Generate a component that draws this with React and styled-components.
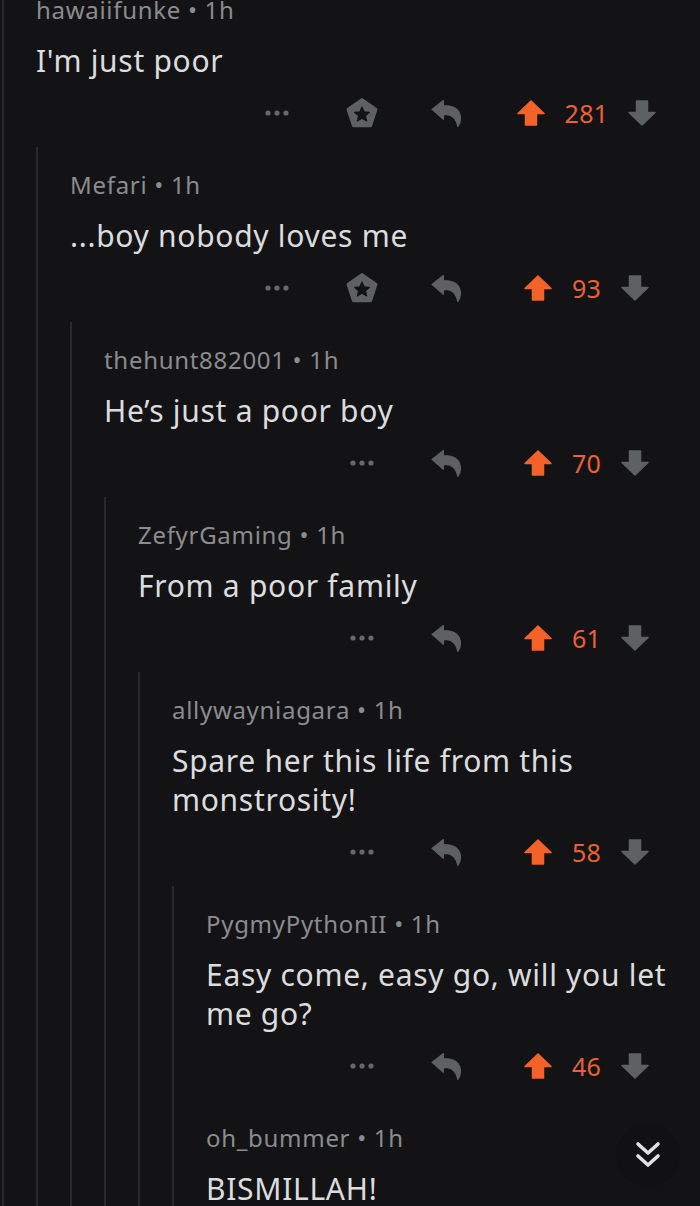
import React from "react";
import styled, { createGlobalStyle } from "styled-components";

const GlobalStyle = createGlobalStyle`
  html, body {
    margin: 0;
    padding: 0;
    background: #131315;
    height: 100%;
    overflow: hidden;
  }
  body {
    font-family: "Noto Sans", "Open Sans", sans-serif;
  }
`;

const Screen = styled.div`
  position: relative;
  width: 700px;
  height: 1206px;
  overflow: hidden;
  background: #131315;
`;

const Thread = styled.div`
  margin: -28px 0 0 2px;
  min-height: 1300px;
  border-left: 2px solid #2a2a2d;
  padding-left: 32px;
`;

const CommentBox = styled.div`
  padding-top: 23px;
`;

const Header = styled.div`
  font-size: 24px;
  line-height: 30px;
  letter-spacing: 0.7px;
  color: #8a8c8f;
  white-space: nowrap;
`;

const Body = styled.div`
  margin-top: 16px;
  padding-right: 28px;
  font-size: 30px;
  line-height: 39px;
  letter-spacing: 0.7px;
  color: #dcdcde;
`;

const Actions = styled.div`
  display: flex;
  justify-content: flex-end;
  align-items: center;
  height: 44px;
  margin: 11px 0 12px;
  padding-right: 16px;
`;

const ActionCell = styled.div`
  width: 85px;
  display: flex;
  align-items: center;
  justify-content: center;
`;

const VoteCell = styled.div`
  width: 195px;
  display: flex;
  align-items: center;
  justify-content: center;
  gap: 20px;
`;

const Score = styled.span`
  font-size: 25px;
  letter-spacing: 0.3px;
  color: #ea6135;
  line-height: 1;
`;

const Replies = styled.div`
  border-left: 2px solid #2a2a2d;
  padding-left: 32px;
`;

const ScrollButton = styled.div`
  position: absolute;
  left: 616px;
  top: 1123px;
  width: 64px;
  height: 64px;
  border-radius: 50%;
  background: #111113;
  display: flex;
  align-items: center;
  justify-content: center;
`;

const GRAY = "#5e6163";
const ORANGE = "#f4622a";

const Dots = () => (
  <svg width="26" height="6" viewBox="0 0 26 6">
    <circle cx="4" cy="3" r="2.6" fill="#66696b" />
    <circle cx="13" cy="3" r="2.6" fill="#66696b" />
    <circle cx="22" cy="3" r="2.6" fill="#66696b" />
  </svg>
);

const Award = () => (
  <svg width="34" height="32" viewBox="-1 -1 30 29">
    <polygon
      points="14,1.5 26.5,10.3 21.6,25 6.4,25 1.5,10.3"
      fill={GRAY}
      stroke={GRAY}
      strokeWidth="3"
      strokeLinejoin="round"
    />
    <path
      d="M14 8 L15.94 12.4 L20.8 12.8 L17.1 16 L18.3 20.8 L14 18.2 L9.7 20.8 L10.9 16 L7.2 12.8 L12.06 12.4 Z"
      fill="#131315"
      stroke="#131315"
      strokeWidth="1"
      strokeLinejoin="round"
    />
  </svg>
);

const Reply = () => (
  <svg width="31" height="27" viewBox="0 0 30 26">
    <path
      d="M1 9 L12 0.5 V5.5 H15 C23 5.5 28.5 10.5 28.5 18 C28.5 21 27.5 23.5 26 25.5 C25 19.5 21 14 15 14 H12 V18.5 Z"
      fill={GRAY}
      stroke={GRAY}
      strokeWidth="1.2"
      strokeLinejoin="round"
    />
  </svg>
);

const Arrow = ({ down, color }) => (
  <svg
    width="28"
    height="26"
    viewBox="0 0 28 26"
    style={down ? { transform: "rotate(180deg)" } : undefined}
  >
    <path
      d="M14 1 L27 13.5 H19.5 V25 H8.5 V13.5 H1 Z"
      fill={color}
      stroke={color}
      strokeWidth="1.5"
      strokeLinejoin="round"
    />
  </svg>
);

const Chevrons = () => (
  <svg width="28" height="30" viewBox="0 0 28 30">
    <path
      d="M4 4 L14 13 L24 4 M4 16 L14 25 L24 16"
      fill="none"
      stroke="#e2e2e4"
      strokeWidth="3.6"
      strokeLinecap="round"
      strokeLinejoin="round"
    />
  </svg>
);

const thread = {
  user: "hawaiifunke",
  body: "I'm just poor",
  score: 281,
  award: true,
  replies: [
    {
      user: "Mefari",
      body: "...boy nobody loves me",
      score: 93,
      award: true,
      replies: [
        {
          user: "thehunt882001",
          body: "He’s just a poor boy",
          score: 70,
          replies: [
            {
              user: "ZefyrGaming",
              body: "From a poor family",
              score: 61,
              replies: [
                {
                  user: "allywayniagara",
                  body: "Spare her this life from this monstrosity!",
                  score: 58,
                  replies: [
                    {
                      user: "PygmyPythonII",
                      body: "Easy come, easy go, will you let me go?",
                      score: 46,
                      replies: [],
                    },
                    {
                      user: "oh_bummer",
                      body: "BISMILLAH!",
                      score: 40,
                      replies: [],
                    },
                  ],
                },
              ],
            },
          ],
        },
      ],
    },
  ],
};

const Comment = ({ c }) => (
  <CommentBox>
    <Header>
      {c.user} • 1h
    </Header>
    <Body>{c.body}</Body>
    <Actions>
      <ActionCell>
        <Dots />
      </ActionCell>
      {c.award && (
        <ActionCell>
          <Award />
        </ActionCell>
      )}
      <ActionCell>
        <Reply />
      </ActionCell>
      <VoteCell>
        <Arrow color={ORANGE} />
        <Score>{c.score}</Score>
        <Arrow down color={GRAY} />
      </VoteCell>
    </Actions>
    {c.replies.length > 0 && (
      <Replies>
        {c.replies.map((r) => (
          <Comment key={r.user} c={r} />
        ))}
      </Replies>
    )}
  </CommentBox>
);

export default function App() {
  return (
    <Screen>
      <GlobalStyle />
      <Thread>
        <Comment c={thread} />
      </Thread>
      <ScrollButton>
        <Chevrons />
      </ScrollButton>
    </Screen>
  );
}
